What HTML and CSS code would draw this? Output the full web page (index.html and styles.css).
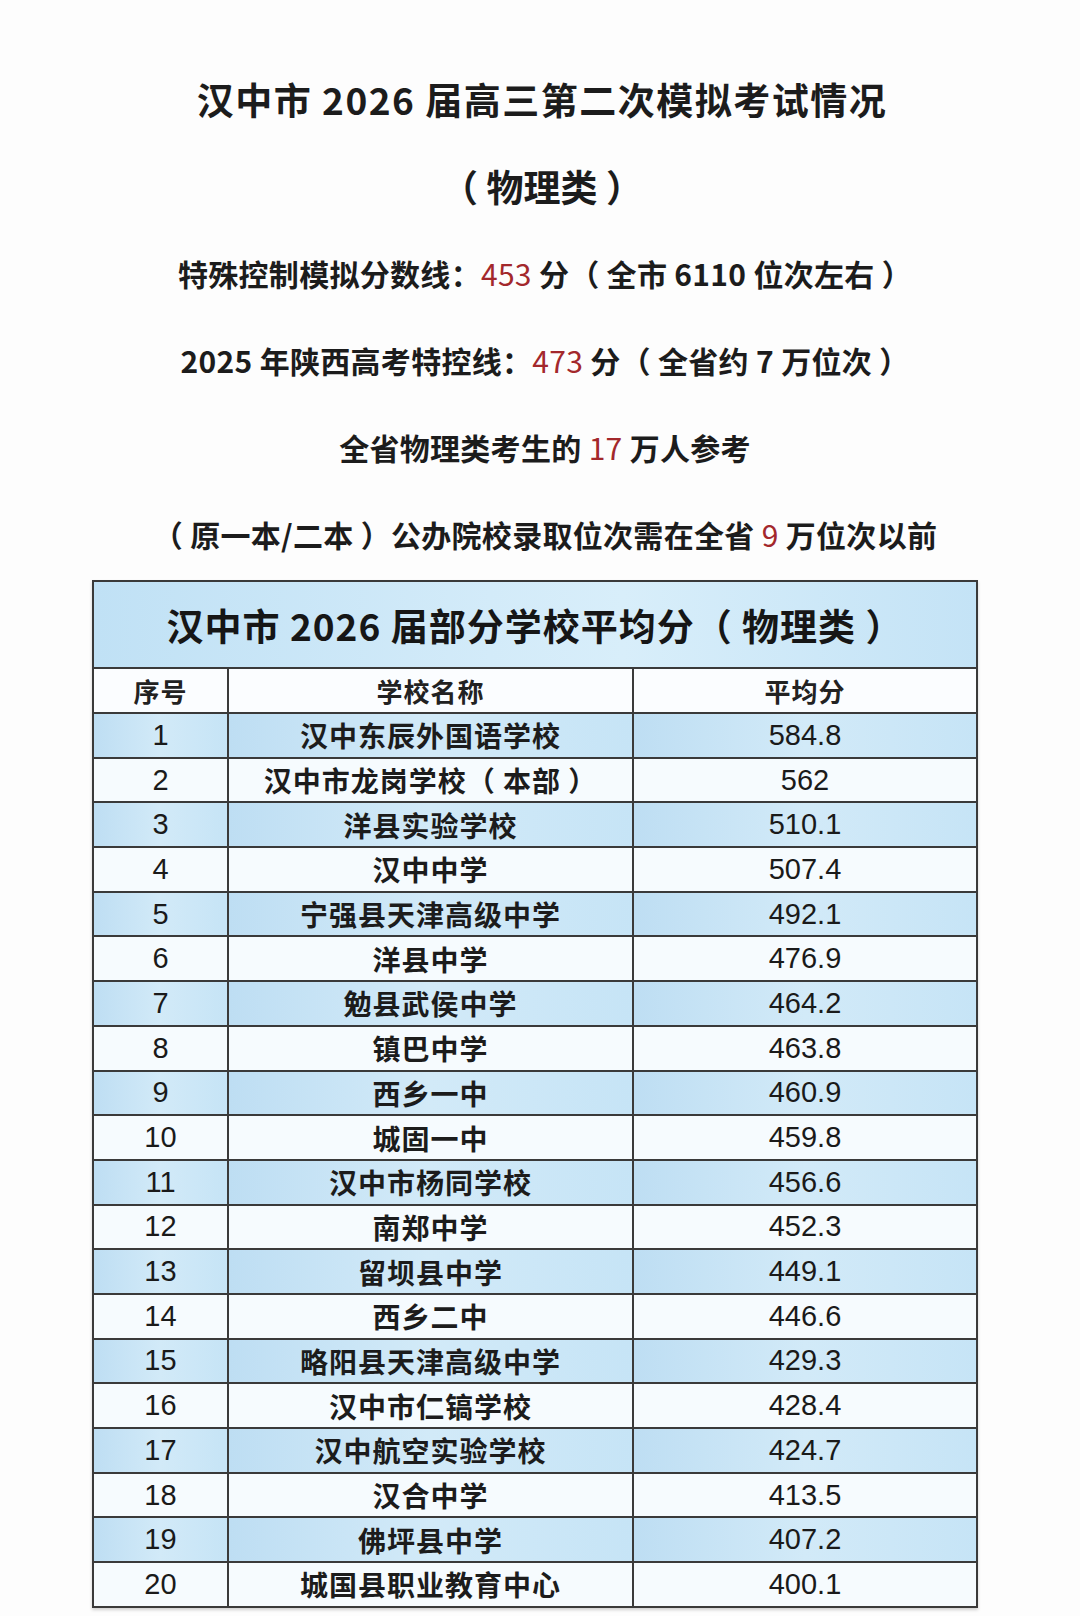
FILE: index.html
```html
<!DOCTYPE html>
<html lang="zh-CN">
<head>
<meta charset="utf-8">
<title>汉中市 2026 届高三第二次模拟考试情况</title>
<link rel="stylesheet" href="styles.css">
</head>
<body>
<main class="page">
  <section class="intro">
    <h1 class="headline">汉中市 2026 届高三第二次模拟考试情况</h1>
    <p class="headline sub">（ 物理类 ）</p>
    <p class="note">特殊控制模拟分数线：<span class="red">453</span> 分（ 全市 6110 位次左右 ）</p>
    <p class="note">2025 年陕西高考特控线：<span class="red">473</span> 分（ 全省约 7 万位次 ）</p>
    <p class="note">全省物理类考生的 <span class="red">17</span> 万人参考</p>
    <p class="note">（ 原一本/二本 ）公办院校录取位次需在全省 <span class="red">9</span> 万位次以前</p>
  </section>

  <section class="table-wrap">
    <table class="scores">
      <colgroup>
        <col class="c-no">
        <col class="c-name">
        <col class="c-avg">
      </colgroup>
      <thead>
        <tr class="band"><th colspan="3">汉中市 2026 届部分学校平均分（ 物理类 ）</th></tr>
        <tr class="head"><th>序号</th><th>学校名称</th><th>平均分</th></tr>
      </thead>
      <tbody>
        <tr class="alt"><td class="num">1</td><td class="name">汉中东辰外国语学校</td><td class="num">584.8</td></tr>
        <tr><td class="num">2</td><td class="name">汉中市龙岗学校（ 本部 ）</td><td class="num">562</td></tr>
        <tr class="alt"><td class="num">3</td><td class="name">洋县实验学校</td><td class="num">510.1</td></tr>
        <tr><td class="num">4</td><td class="name">汉中中学</td><td class="num">507.4</td></tr>
        <tr class="alt"><td class="num">5</td><td class="name">宁强县天津高级中学</td><td class="num">492.1</td></tr>
        <tr><td class="num">6</td><td class="name">洋县中学</td><td class="num">476.9</td></tr>
        <tr class="alt"><td class="num">7</td><td class="name">勉县武侯中学</td><td class="num">464.2</td></tr>
        <tr><td class="num">8</td><td class="name">镇巴中学</td><td class="num">463.8</td></tr>
        <tr class="alt"><td class="num">9</td><td class="name">西乡一中</td><td class="num">460.9</td></tr>
        <tr><td class="num">10</td><td class="name">城固一中</td><td class="num">459.8</td></tr>
        <tr class="alt"><td class="num">11</td><td class="name">汉中市杨同学校</td><td class="num">456.6</td></tr>
        <tr><td class="num">12</td><td class="name">南郑中学</td><td class="num">452.3</td></tr>
        <tr class="alt"><td class="num">13</td><td class="name">留坝县中学</td><td class="num">449.1</td></tr>
        <tr><td class="num">14</td><td class="name">西乡二中</td><td class="num">446.6</td></tr>
        <tr class="alt"><td class="num">15</td><td class="name">略阳县天津高级中学</td><td class="num">429.3</td></tr>
        <tr><td class="num">16</td><td class="name">汉中市仁镐学校</td><td class="num">428.4</td></tr>
        <tr class="alt"><td class="num">17</td><td class="name">汉中航空实验学校</td><td class="num">424.7</td></tr>
        <tr><td class="num">18</td><td class="name">汉合中学</td><td class="num">413.5</td></tr>
        <tr class="alt"><td class="num">19</td><td class="name">佛坪县中学</td><td class="num">407.2</td></tr>
        <tr><td class="num">20</td><td class="name">城国县职业教育中心</td><td class="num">400.1</td></tr>
      </tbody>
    </table>
  </section>
</main>
</body>
</html>
```

FILE: styles.css
```css
html, body {
  margin: 0;
  padding: 0;
  background: #fdfdfd;
}

body {
  font-family: "Noto Sans CJK SC", "Noto Sans", sans-serif;
  color: #1c1c1c;
}

.page {
  width: 1080px;
  min-height: 1616px;
  box-sizing: border-box;
  padding-top: 56px;
  display: flex;
  flex-direction: column;
}

.intro {
  display: flex;
  flex-direction: column;
  align-items: center;
}

.headline {
  margin: 0;
  height: 87px;
  line-height: 87px;
  font-size: 37px;
  font-weight: 700;
  letter-spacing: 1.5px;
  text-align: center;
  transform: translateX(2px);
}

.headline.sub {
  letter-spacing: 0;
}

.note {
  margin: 0;
  height: 87px;
  line-height: 87px;
  font-size: 30px;
  font-weight: 700;
  letter-spacing: 0.3px;
  text-align: center;
  transform: translateX(5px);
}

.red {
  color: #a3282c;
  font-weight: 400;
}

.table-wrap {
  margin-top: 2px;
  padding-left: 92px;
}

.scores {
  width: 884px;
  border-collapse: collapse;
  table-layout: fixed;
  border: 2px solid #3a3a3a;
  box-shadow: 0 2px 3px rgba(0, 0, 0, 0.18);
}

.c-no { width: 135px; }
.c-name { width: 405px; }
.c-avg { width: 344px; }

.scores th,
.scores td {
  border: 2px solid #3a3a3a;
  padding: 0;
  text-align: center;
  vertical-align: middle;
}

.band th {
  height: 85px;
  font-size: 37px;
  font-weight: 700;
  letter-spacing: 1px;
  color: #161616;
  background: linear-gradient(90deg, #c0e1f5 0%, #d3ebf9 45%, #d8eefa 60%, #c4e3f6 100%);
}

.head th {
  height: 43px;
  font-size: 26px;
  font-weight: 700;
  letter-spacing: 1px;
  color: #222;
  background: #fbfdff;
}

.scores td {
  height: 42.7px;
  background: #f6fbfe;
}

.scores tr.alt td {
  background: linear-gradient(90deg, #bedef3 0%, #d2eaf8 50%, #c6e4f6 100%);
}

.num {
  font-family: "Liberation Sans", Arial, sans-serif;
  font-size: 29px;
  color: #1a1a1a;
}

.name {
  font-size: 28px;
  font-weight: 700;
  letter-spacing: 1px;
  color: #1c1c1c;
}
```
